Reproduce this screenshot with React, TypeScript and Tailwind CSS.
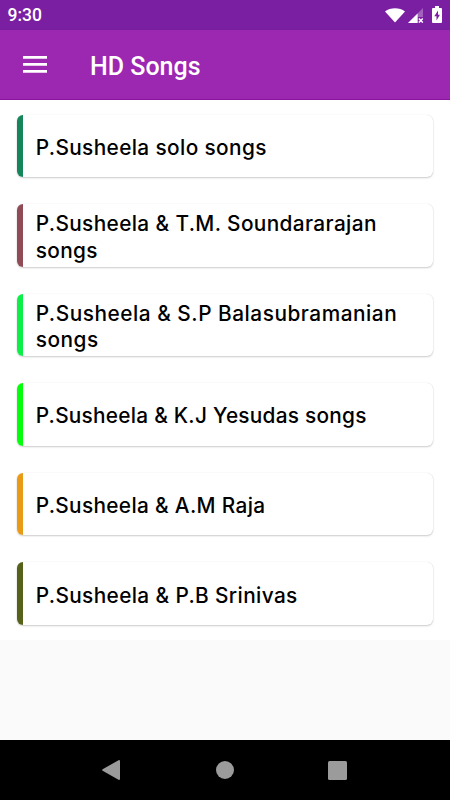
const songGroups = [
  { title: "P.Susheela solo songs", accent: "bg-[#17855a]", tracking: "tracking-[0.38px]" },
  { title: "P.Susheela & T.M. Soundararajan songs", accent: "bg-[#904b56]", tracking: "tracking-[0.38px]" },
  { title: "P.Susheela & S.P Balasubramanian songs", accent: "bg-[#0cef49]", tracking: "tracking-[0.53px]" },
  { title: "P.Susheela & K.J Yesudas songs", accent: "bg-[#04ff0c]", tracking: "tracking-[0.26px]" },
  { title: "P.Susheela & A.M Raja", accent: "bg-[#ea9b16]", tracking: "tracking-[0.34px]" },
  { title: "P.Susheela & P.B Srinivas", accent: "bg-[#566119]", tracking: "tracking-[0.38px]" },
];

function StatusBar() {
  return (
    <div className="flex h-[30px] items-center justify-between bg-[#7b1fa2] pl-[7.5px] pr-[8px] text-white">
      <span className="pt-[2px] text-[17.5px] font-medium leading-none">9:30</span>
      <div className="flex h-[30px] items-center">
        <svg width="20" height="15" viewBox="0 0 20 15" fill="currentColor">
          <path d="M0 3.4C5.4-.9 14.6-.9 20 3.4L10 14.6z" />
        </svg>
        <svg className="ml-[3px]" width="16" height="15" viewBox="0 0 16 15" fill="currentColor">
          <path d="M0 15 15 0v9H9.6v6z" opacity=".3" />
          <path d="M0 15 9.6 5.4V15z" />
          <path d="m10.8 10.6 4 4m0-4-4 4" stroke="currentColor" strokeWidth="1.4" />
        </svg>
        <svg className="-mt-[1px] ml-[8px]" width="10" height="17" viewBox="0 0 10 17">
          <path d="M3 0h4v2h2q1 0 1 1v13q0 1-1 1H1q-1 0-1-1V3q0-1 1-1h2z" fill="currentColor" />
          <path d="M6 4.5 2.3 10.2h2.2v4.3L7.9 8.7H6z" fill="#7b1fa2" />
        </svg>
      </div>
    </div>
  );
}

function AppBar() {
  return (
    <header className="flex h-[70px] items-center border-b border-[#8a149b] bg-[#9c27b0] pl-[23px] text-white shadow-[0_1px_2px_rgba(0,0,0,0.12)]">
      <button aria-label="Menu">
        <svg width="24" height="17" viewBox="0 0 24 17" fill="currentColor">
          <path d="M0 0h24v2.7H0zM0 7h24v2.7H0zM0 14h24v2.7H0z" />
        </svg>
      </button>
      <h1 className="ml-[43px] mt-[4px] text-[25px] font-medium leading-none">HD Songs</h1>
    </header>
  );
}

function NavigationBar() {
  return (
    <nav className="flex h-[60px] items-center bg-black text-[#9b9b9b]">
      <svg className="ml-[102px]" width="18" height="20" viewBox="0 0 18 20" fill="currentColor">
        <path d="M17 0q1 0 1 1v18q0 1-1 1L.6 10.8q-1-.8 0-1.6z" />
      </svg>
      <div className="ml-[96px] size-[18px] rounded-full bg-[#9b9b9b]" />
      <div className="ml-[94px] size-[19px] rounded-[1.5px] bg-[#9b9b9b]" />
    </nav>
  );
}

export default function App() {
  return (
    <div className="flex h-[800px] w-[450px] flex-col overflow-hidden bg-[#fafafa] font-['Roboto',sans-serif]">
      <StatusBar />
      <AppBar />
      <main className="flex h-[540px] flex-col gap-[27.1px] bg-white pl-[16.7px] pr-[16.8px] pt-[14.5px]">
        {songGroups.map((group) => (
          <div
            key={group.title}
            className="flex h-[62.5px] shrink-0 overflow-hidden rounded-[6px] bg-white shadow-[0_1px_2px_rgba(0,0,0,0.2),0_0_1px_rgba(0,0,0,0.14)]"
          >
            <div className={`w-[6.3px] shrink-0 ${group.accent}`} />
            <div className="flex flex-1 items-center pl-[12.7px] pt-[4.5px]">
              <span
                className={`font-['Inter',sans-serif] text-[20.8px] font-[450] leading-[26.6px] text-black ${group.tracking}`}
              >
                {group.title}
              </span>
            </div>
          </div>
        ))}
      </main>
      <div className="flex-1" />
      <NavigationBar />
    </div>
  );
}
